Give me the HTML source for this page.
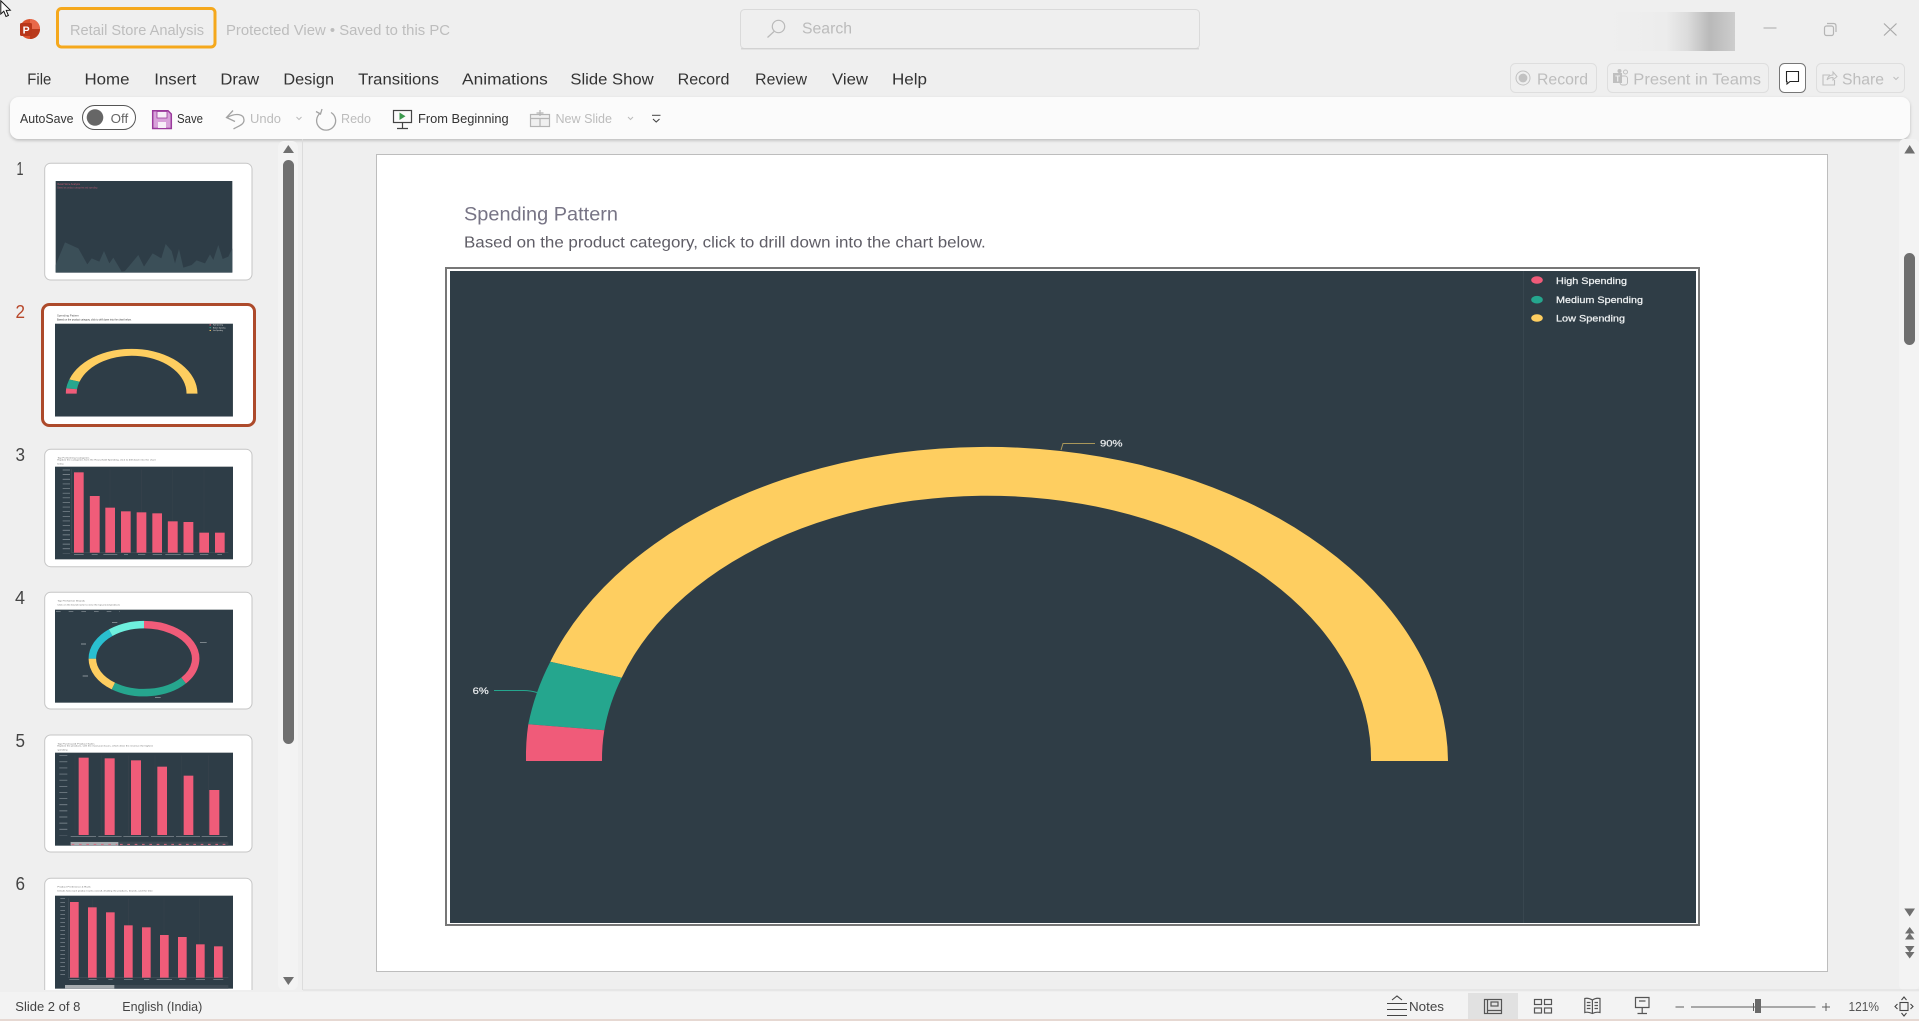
<!DOCTYPE html>
<html lang="en">
<head>
<meta charset="utf-8">
<title>Retail Store Analysis</title>
<style>
html,body{margin:0;padding:0;background:#efefef;overflow:hidden}
svg{display:block;font-family:"Liberation Sans",sans-serif}
.tab{font-size:15.5px;fill:#333}
.rb{font-size:13px;fill:#333}
.rbd{font-size:13px;fill:#bcbcbc}
.tt{font-size:14.5px;fill:#bdbdbd}
.rt{font-size:15.5px;fill:#bdbdbd}
.st{font-size:13px;fill:#444}
.num{font-size:18px;fill:#444}
.lg{font-size:9.5px;fill:#eef1f2;stroke:#eef1f2;stroke-width:.25px}
.pc{font-size:9px;fill:#e3e6e8;stroke:#e3e6e8;stroke-width:.25px}
.tiny{font-size:4.5px;fill:#666}
</style>
</head>
<body>
<svg xmlns="http://www.w3.org/2000/svg" width="1919" height="1021" viewBox="0 0 1919 1021">
<defs>
<linearGradient id="blurg" x1="0" x2="1" y1="0" y2="0">
<stop offset="0" stop-color="#efefef"/><stop offset=".45" stop-color="#ececec"/><stop offset=".62" stop-color="#dcdcdc"/><stop offset=".8" stop-color="#b9b9b9"/><stop offset="1" stop-color="#cdcdcd"/>
</linearGradient>
<filter id="shd" x="-2%" y="-30%" width="104%" height="170%"><feDropShadow dx="0" dy="1.5" stdDeviation="1.5" flood-color="#000" flood-opacity=".22"/></filter>
<filter id="soft" x="-5%" y="-5%" width="110%" height="110%"><feGaussianBlur stdDeviation=".25"/></filter>
<clipPath id="paneclip"><rect x="0" y="140" width="278" height="850"/></clipPath>
</defs>

<rect width="1919" height="1021" fill="#efefef"/>

<!-- Cursor -->
<path d="M.8 .8 L.8 14 L3.8 11.2 L6 16.5 L8.4 15.5 L6.2 10.4 L10.3 10.2 Z" fill="#fff" stroke="#111" stroke-width="1"/>

<!-- Logo -->
<circle cx="30" cy="29" r="10" fill="#d9512c"/>
<path d="M30 19 A10 10 0 0 1 40 29 L30 29 Z" fill="#e8694a"/>
<path d="M30 29 L40 29 A10 10 0 0 1 30 39 Z" fill="#b93a1c"/>
<rect x="20" y="23" width="12" height="13" rx="1.5" fill="#b8371a"/>
<text x="22.6" y="33.4" font-size="10.5" font-weight="bold" fill="#fff">P</text>

<!-- Title -->
<rect x="57.5" y="8.5" width="157.5" height="38.5" rx="4" fill="none" stroke="#f5a81c" stroke-width="3"/>
<text class="tt" x="70" y="35" textLength="134" lengthAdjust="spacingAndGlyphs">Retail Store Analysis</text>
<text class="tt" x="226" y="35" textLength="224" lengthAdjust="spacingAndGlyphs">Protected View • Saved to this PC</text>

<!-- Search -->
<rect x="740.5" y="9.5" width="459" height="39" rx="4" fill="#efefef" stroke="#dadada" stroke-width="1"/>
<path d="M741 48.8 H1199" stroke="#cfcfcf" stroke-width="1.2"/>
<circle cx="778.5" cy="26.5" r="6.2" fill="none" stroke="#b9b9b9" stroke-width="1.2"/>
<path d="M774 31.5 L767.5 37.5" stroke="#b9b9b9" stroke-width="1.2"/>
<text x="802" y="33.5" font-size="15.5" fill="#bbb" textLength="50" lengthAdjust="spacingAndGlyphs">Search</text>

<!-- Window controls -->
<rect x="1609.5" y="12" width="125.5" height="39" fill="url(#blurg)"/>
<path d="M1763.5 28 H1776.5" stroke="#b5b5b5" stroke-width="1.2"/>
<rect x="1824.5" y="26" width="9" height="9.5" rx="2" fill="none" stroke="#b5b5b5" stroke-width="1.2"/>
<path d="M1827 23.5 H1833.5 Q1836 23.5 1836 26 V32" fill="none" stroke="#b5b5b5" stroke-width="1.2"/>
<path d="M1884 23.5 L1896.5 35.5 M1896.5 23.5 L1884 35.5" stroke="#a9a9a9" stroke-width="1.2"/>

<!-- Tabs -->
<text class="tab" x="27.3" y="84.3" textLength="24" lengthAdjust="spacingAndGlyphs">File</text>
<text class="tab" x="84.5" y="84.3" textLength="45" lengthAdjust="spacingAndGlyphs">Home</text>
<text class="tab" x="154.3" y="84.3" textLength="42" lengthAdjust="spacingAndGlyphs">Insert</text>
<text class="tab" x="220.4" y="84.3" textLength="38.8" lengthAdjust="spacingAndGlyphs">Draw</text>
<text class="tab" x="283.4" y="84.3" textLength="50.6" lengthAdjust="spacingAndGlyphs">Design</text>
<text class="tab" x="358.1" y="84.3" textLength="80.8" lengthAdjust="spacingAndGlyphs">Transitions</text>
<text class="tab" x="462" y="84.3" textLength="85.8" lengthAdjust="spacingAndGlyphs">Animations</text>
<text class="tab" x="570.4" y="84.3" textLength="83.2" lengthAdjust="spacingAndGlyphs">Slide Show</text>
<text class="tab" x="677.6" y="84.3" textLength="51.8" lengthAdjust="spacingAndGlyphs">Record</text>
<text class="tab" x="755.2" y="84.3" textLength="51.8" lengthAdjust="spacingAndGlyphs">Review</text>
<text class="tab" x="832" y="84.3" textLength="36" lengthAdjust="spacingAndGlyphs">View</text>
<text class="tab" x="892" y="84.3" textLength="35" lengthAdjust="spacingAndGlyphs">Help</text>

<!-- Top-right buttons -->
<rect x="1510.5" y="63.5" width="86" height="29" rx="5" fill="none" stroke="#dedede"/>
<circle cx="1523" cy="78" r="7" fill="none" stroke="#c2c2c2"/><circle cx="1523" cy="78" r="4.4" fill="#c2c2c2"/>
<text class="rt" x="1537" y="84.3" textLength="51" lengthAdjust="spacingAndGlyphs">Record</text>
<rect x="1607.5" y="63.5" width="161" height="29" rx="5" fill="none" stroke="#dedede"/>
<rect x="1613" y="73" width="9" height="10" fill="#bfbfbf"/>
<rect x="1620" y="76" width="7.5" height="9" rx="2.5" fill="none" stroke="#bfbfbf"/>
<circle cx="1625.5" cy="72" r="2" fill="none" stroke="#bfbfbf"/><circle cx="1619.5" cy="71" r="2" fill="#bfbfbf"/>
<text x="1615.3" y="81.5" font-size="8" font-weight="bold" fill="#efefef">T</text>
<text class="rt" x="1633.3" y="84.3" textLength="127.7" lengthAdjust="spacingAndGlyphs">Present in Teams</text>
<rect x="1779.5" y="63.5" width="26" height="29" rx="5" fill="#fff" stroke="#777"/>
<path d="M1786.5 71.5 H1798.5 V81.5 H1790 L1787 84 V81.5 H1786.5 Z" fill="none" stroke="#222" stroke-width="1.1"/>
<rect x="1816.5" y="63.5" width="88" height="29" rx="5" fill="none" stroke="#dedede"/>
<path d="M1830 75 H1823 V85 H1834.5 V80" fill="none" stroke="#bfbfbf" stroke-width="1.1"/>
<path d="M1827 80 Q1828 75 1833 75 V72 L1837 76.5 L1833 80 V77.5 Q1829 77.5 1827 80 Z" fill="none" stroke="#bfbfbf" stroke-width="1"/>
<text class="rt" x="1842" y="84.3" textLength="42" lengthAdjust="spacingAndGlyphs">Share</text>
<path d="M1893.5 77 L1896 79.5 L1898.5 77" fill="none" stroke="#bfbfbf" stroke-width="1"/>

<!-- Quick access ribbon -->
<rect x="10" y="97" width="1900" height="42" rx="9" fill="#fbfbfb" filter="url(#shd)"/>
<text class="rb" x="20" y="123" textLength="53.5" lengthAdjust="spacingAndGlyphs">AutoSave</text>
<rect x="82.5" y="105.5" width="53" height="24" rx="12" fill="#fff" stroke="#555" stroke-width="1"/>
<circle cx="95" cy="117.5" r="8.3" fill="#666"/>
<text class="rb" x="110.6" y="123" textLength="17.6" lengthAdjust="spacingAndGlyphs" style="fill:#666">Off</text>
<!-- Save -->
<path d="M152.7 110.7 H168 L171.3 114 V128.5 H152.7 Z" fill="#d8a2da" stroke="#9a3a9c" stroke-width="1.5"/>
<rect x="157" y="111.5" width="10" height="6.5" fill="#f7eef8" stroke="#9a3a9c" stroke-width=".8"/>
<rect x="158" y="122" width="8" height="6" fill="#f7eef8"/>
<text class="rb" x="177" y="123" textLength="26" lengthAdjust="spacingAndGlyphs">Save</text>
<!-- Undo -->
<path d="M233 110.5 L226.5 117.5 L235 121.5" fill="none" stroke="#a3a3a3" stroke-width="1.3"/>
<path d="M227 117.5 C236 112.5 244 114 244 120 C244 125 238 126 233.5 129" fill="none" stroke="#a3a3a3" stroke-width="1.3"/>
<text class="rbd" x="250" y="123" textLength="31" lengthAdjust="spacingAndGlyphs">Undo</text>
<path d="M296.5 117 L299 119.5 L301.5 117" fill="none" stroke="#bbb" stroke-width="1"/>
<!-- Redo -->
<path d="M320.5 113 A9.5 9.5 0 1 0 331 112.5" fill="none" stroke="#a3a3a3" stroke-width="1.3"/>
<path d="M322 109 L320.5 114 L316 111.5" fill="none" stroke="#a3a3a3" stroke-width="1.3"/>
<text class="rbd" x="341" y="123" textLength="30" lengthAdjust="spacingAndGlyphs">Redo</text>
<!-- From Beginning -->
<rect x="393.5" y="110.5" width="18" height="12" fill="none" stroke="#444" stroke-width="1.2"/>
<path d="M399.5 112.5 V120 L405.5 116.2 Z" fill="#3c9a4e"/>
<path d="M402.5 122.5 V128 M397 128.5 H408" stroke="#444" stroke-width="1.2"/>
<text class="rb" x="418" y="123" textLength="90.6" lengthAdjust="spacingAndGlyphs">From Beginning</text>
<!-- New Slide -->
<rect x="530.5" y="114.5" width="19" height="12" fill="#f0f0f0" stroke="#b5b5b5" stroke-width="1.2"/>
<path d="M530.5 118.5 H549.5 M540 118.5 V126.5 M540 110 V116 M536.5 113 H543.5" stroke="#b5b5b5" stroke-width="1.2" fill="none"/>
<text class="rbd" x="555.5" y="123" textLength="56.5" lengthAdjust="spacingAndGlyphs">New Slide</text>
<path d="M628 117 L630.5 119.5 L633 117" fill="none" stroke="#bbb" stroke-width="1"/>
<!-- Customize -->
<path d="M652 115.3 H660.5" stroke="#444" stroke-width="1"/>
<path d="M653 119 L656.2 122 L659.5 119" fill="none" stroke="#444" stroke-width="1.1"/>

<!-- Thumbnail pane -->
<g clip-path="url(#paneclip)">
  <!-- 1 -->
  <rect x="44.7" y="163.2" width="207.3" height="116.8" rx="6" fill="#fff" stroke="#c6c6c6"/>
  <g transform="translate(0,145) scale(.33333)" filter="url(#soft)">
    <rect x="167" y="108" width="530" height="275" fill="#2f3d46"/>
    <path d="M167 360 L195 292 L235 310 L262 358 L275 340 L298 350 L312 318 L328 355 L340 338 L365 380 L375 378 L415 330 L432 365 L458 325 L484 340 L497 297 L515 318 L525 355 L537 312 L550 368 L575 360 L590 346 L615 355 L630 328 L640 345 L655 300 L668 342 L685 335 L697 310 V382 H167 Z" fill="#3b4f59"/>
    <text x="172" y="120" font-size="7" fill="#c25a72" textLength="68" lengthAdjust="spacingAndGlyphs">Retail Store Analysis</text>
    <text x="172" y="130" font-size="7" fill="#a85770" textLength="120" lengthAdjust="spacingAndGlyphs">Based on product categories and spending</text>
  </g>
  <!-- 2 -->
  <rect x="42.5" y="304.5" width="212" height="121" rx="7" fill="#fff" stroke="#ad4a2b" stroke-width="3"/>
  <g transform="translate(-9.26,285) scale(.1428)" filter="url(#soft)">
    <rect x="450" y="271" width="1246" height="650" fill="#2f3d46"/>
    <path d="M550.3 661.7 A461 316 0 0 1 1448 761 H1371 A384 263 0 0 0 621.7 677.7 Z" fill="#fece60"/>
    <path d="M528.3 724.3 A461 316 0 0 1 550.3 661.7 L621.7 677.7 A384 263 0 0 0 604.3 730.3 Z" fill="#25a68e"/>
    <path d="M526 761 A461 316 0 0 1 528.3 724.3 L604.3 730.3 A384 263 0 0 0 602 761 Z" fill="#f05b79"/>
    <text x="464" y="220" font-size="19" fill="#555" textLength="154" lengthAdjust="spacingAndGlyphs">Spending Pattern</text>
    <text x="464" y="248" font-size="16" fill="#333" textLength="521" lengthAdjust="spacingAndGlyphs">Based on the product category, click to drill down into the chart below.</text>
    <text x="1556" y="284" font-size="11" fill="#ddd" textLength="71" lengthAdjust="spacingAndGlyphs">High Spending</text>
    <text x="1556" y="303" font-size="11" fill="#ddd" textLength="87" lengthAdjust="spacingAndGlyphs">Medium Spending</text>
    <text x="1556" y="322" font-size="11" fill="#ddd" textLength="69" lengthAdjust="spacingAndGlyphs">Low Spending</text>
    <ellipse cx="1537" cy="280" rx="6" ry="4" fill="#f05b79"/><ellipse cx="1537" cy="299" rx="6" ry="4" fill="#25a68e"/><ellipse cx="1537" cy="318" rx="6" ry="4" fill="#fece60"/>
  </g>
  <!-- 3 -->
  <rect x="44.7" y="449.3" width="207.3" height="117.4" rx="6" fill="#fff" stroke="#c6c6c6"/>
  <g transform="translate(0,440) scale(.33333)" filter="url(#soft)">
    <text class="tiny" x="172" y="55" textLength="96" lengthAdjust="spacingAndGlyphs">Top Performing Categories</text>
    <text class="tiny" x="172" y="62" textLength="295" lengthAdjust="spacingAndGlyphs">Explore the categories from the Household Spending, click to drill down into the chart</text>
    <text class="tiny" x="172" y="74" textLength="20" lengthAdjust="spacingAndGlyphs">below.</text>
    <rect x="165" y="80" width="534" height="278" fill="#2f3d46"/>
    <path d="M199 89 V340" stroke="#87929a" stroke-width="22" stroke-dasharray="2 11.9"/>
    <path d="M215 88 V338 H685" stroke="#5b6871" stroke-width="1" fill="none"/>
    <path d="M236 88 V338 M330 88 V338 M424 88 V338 M518 88 V338 M612 88 V338" stroke="#3a4853" stroke-width="1"/>
    <g fill="#f05b79"><rect x="222" y="97" width="29" height="241"/><rect x="269.5" y="168" width="29.5" height="170"/><rect x="316" y="203" width="29" height="135"/><rect x="363" y="214" width="29" height="124"/><rect x="410" y="217" width="29" height="121"/><rect x="457" y="220" width="29" height="118"/><rect x="503.5" y="244" width="29.5" height="94"/><rect x="550.5" y="246" width="29.5" height="92"/><rect x="598" y="278" width="29" height="60"/><rect x="645" y="278" width="29" height="60"/></g>
    <path d="M222 343 H251 M275 343 H293 M310 343 H352 M372 343 H384 M414 343 H436 M458 343 H486 M496 343 H542 M551 343 H581 M600 343 H625 M652 343 H666" stroke="#8d979e" stroke-width="2"/>
  </g>
  <!-- 4 -->
  <rect x="44.7" y="592.3" width="207.3" height="116.7" rx="6" fill="#fff" stroke="#c6c6c6"/>
  <g transform="translate(0,440) scale(.33333)" filter="url(#soft)">
    <text class="tiny" x="172" y="485" textLength="83" lengthAdjust="spacingAndGlyphs">Top Performer Brands</text>
    <text class="tiny" x="172" y="497" textLength="188" lengthAdjust="spacingAndGlyphs">Click on the brand name to view the top priced products</text>
    <rect x="165" y="509" width="534" height="279" fill="#2f3d46"/>
    <path d="M168 514 H360" stroke="#8d979e" stroke-width="2" stroke-dasharray="14 24"/>
    <g fill="none" stroke-width="22.5">
      <path d="M432 554 A155 102 0 0 1 550.7 721.6" stroke="#f05b79"/>
      <path d="M550.7 721.6 A155 102 0 0 1 340 738" stroke="#25a68e"/>
      <path d="M340 738 A155 102 0 0 1 277 656" stroke="#fece60"/>
      <path d="M277 656 A155 102 0 0 1 332 578" stroke="#2bbfd0"/>
      <path d="M332 578 A155 102 0 0 1 432 554" stroke="#6ef0de"/>
    </g>
    <path d="M243 612 H258 M248 708 H264 M600 607 H620 M465 772 H482 M336 548 H352" stroke="#a8b0b5" stroke-width="2"/>
  </g>
  <!-- 5 -->
  <rect x="44.7" y="735" width="207.3" height="117" rx="6" fill="#fff" stroke="#c6c6c6"/>
  <g transform="translate(0,730) scale(.33333)" filter="url(#soft)">
    <text class="tiny" x="172" y="44" textLength="112" lengthAdjust="spacingAndGlyphs">Top Purchased Product Sales</text>
    <text class="tiny" x="172" y="50" textLength="287" lengthAdjust="spacingAndGlyphs">Explore the products, with the most purchases, which drive the revenue the highest</text>
    <text class="tiny" x="172" y="62" textLength="30" lengthAdjust="spacingAndGlyphs">spending</text>
    <rect x="165" y="68" width="534" height="279" fill="#2f3d46"/>
    <path d="M190 76 V316" stroke="#87929a" stroke-width="24" stroke-dasharray="2 16.4"/>
    <path d="M225 76 V315 M305 76 V315 M385 76 V315 M465 76 V315 M545 76 V315 M625 76 V315" stroke="#3a4853" stroke-width="1"/>
    <g fill="#f05b79"><rect x="236" y="83" width="30" height="232"/><rect x="314" y="85" width="30" height="230"/><rect x="393" y="91" width="30" height="224"/><rect x="472" y="110" width="29" height="205"/><rect x="551" y="137" width="29" height="178"/><rect x="628" y="180" width="30" height="135"/></g>
    <path d="M212 320 H288 M295 320 H365 M370 320 H446 M453 320 H522 M528 320 H600 M605 320 H682" stroke="#8d979e" stroke-width="2"/>
    <rect x="210" y="335" width="475" height="12" fill="#3c4952"/>
    <rect x="212" y="336" width="143" height="11" fill="#a7acb0"/>
    <path d="M215 343 H352 M360 343 H684" stroke="#d9677f" stroke-width="3" stroke-dasharray="8 14"/>
  </g>
  <!-- 6 -->
  <rect x="44.7" y="878.3" width="207.3" height="130" rx="6" fill="#fff" stroke="#c6c6c6"/>
  <g transform="translate(0,730) scale(.33333)" filter="url(#soft)">
    <text class="tiny" x="172" y="473" textLength="100" lengthAdjust="spacingAndGlyphs">Product Preference &amp; Rank</text>
    <text class="tiny" x="172" y="485" textLength="286" lengthAdjust="spacingAndGlyphs">Details how each product ranks overall, dividing the products, brands, and the time</text>
    <rect x="165" y="497" width="534" height="279" fill="#2f3d46"/>
    <path d="M188 505 V745" stroke="#87929a" stroke-width="14" stroke-dasharray="2 10"/>
    <path d="M205 505 V743 H685" stroke="#5b6871" stroke-width="1" fill="none"/>
    <path d="M278 505 V743 M385 505 V743 M492 505 V743 M599 505 V743" stroke="#3a4853" stroke-width="1"/>
    <g fill="#f05b79"><rect x="210" y="516" width="26" height="227"/><rect x="264" y="532" width="26" height="211"/><rect x="318" y="547" width="26" height="196"/><rect x="372" y="586" width="26" height="157"/><rect x="426" y="592" width="26" height="151"/><rect x="480" y="615" width="26" height="128"/><rect x="534" y="621" width="26" height="122"/><rect x="588" y="643" width="26" height="100"/><rect x="642" y="649" width="26" height="94"/></g>
    <path d="M208 748 H238 M266 748 H290 M325 748 H338 M372 748 H398 M432 748 H448 M470 748 H516 M538 748 H556 M587 748 H615 M640 748 H670" stroke="#8d979e" stroke-width="2"/>
    <rect x="195" y="765" width="490" height="11" fill="#3c4952"/>
    <rect x="195" y="765" width="148" height="11" fill="#a7acb0"/>
  </g>
</g>
<text class="num" x="16.5" y="175" textLength="7" lengthAdjust="spacingAndGlyphs">1</text>
<text class="num" x="15.5" y="318" textLength="9.5" lengthAdjust="spacingAndGlyphs" style="fill:#b7472a">2</text>
<text class="num" x="15.5" y="461" textLength="9.5" lengthAdjust="spacingAndGlyphs">3</text>
<text class="num" x="15" y="604" textLength="10" lengthAdjust="spacingAndGlyphs">4</text>
<text class="num" x="15.5" y="747" textLength="9.5" lengthAdjust="spacingAndGlyphs">5</text>
<text class="num" x="15.5" y="890" textLength="9.5" lengthAdjust="spacingAndGlyphs">6</text>

<!-- Left scrollbar -->
<rect x="278" y="141" width="20" height="849" rx="6" fill="#f3f3f3"/>
<path d="M288.3 145 L294 153 H283 Z" fill="#6f6f6f"/>
<rect x="283" y="160" width="11" height="584" rx="5.5" fill="#6f6f6f"/>
<path d="M288.3 985 L294 977 H283 Z" fill="#6f6f6f"/>
<path d="M302.5 139 V990" stroke="#dcdcdc" stroke-width="1"/>

<!-- Slide -->
<rect x="376.5" y="154.5" width="1451" height="817" fill="#fff" stroke="#bdbdbd" stroke-width="1"/>
<text x="464" y="220.7" font-size="19.5" fill="#777485" textLength="154" lengthAdjust="spacingAndGlyphs">Spending Pattern</text>
<text x="464" y="247.7" font-size="16" fill="#5f5d66" textLength="521.7" lengthAdjust="spacingAndGlyphs">Based on the product category, click to drill down into the chart below.</text>

<!-- Chart -->
<rect x="446" y="268" width="1253" height="657" fill="#fff" stroke="#777" stroke-width="2"/>
<rect x="450" y="271" width="1246" height="652" fill="#2f3d46"/>
<path d="M1523.5 271 V923" stroke="#38464f" stroke-width="1"/>
<path d="M550.3 661.7 A461 316 0 0 1 1448 761 H1371 A384 263 0 0 0 621.7 677.7 Z" fill="#fece60"/>
<path d="M528.3 724.3 A461 316 0 0 1 550.3 661.7 L621.7 677.7 A384 263 0 0 0 604.3 730.3 Z" fill="#25a68e"/>
<path d="M526 761 A461 316 0 0 1 528.3 724.3 L604.3 730.3 A384 263 0 0 0 602 761 Z" fill="#f05b79"/>
<path d="M494 690.5 H524 Q530 690.5 537 692.5" fill="none" stroke="#25a68e" stroke-width="1"/>
<text class="pc" x="472.7" y="694" textLength="16" lengthAdjust="spacingAndGlyphs">6%</text>
<path d="M1095 443.5 H1063 L1061 450" fill="none" stroke="#a8965a" stroke-width="1"/>
<text class="pc" x="1100" y="446.5" textLength="22.5" lengthAdjust="spacingAndGlyphs">90%</text>
<ellipse cx="1537" cy="280" rx="5.8" ry="3.8" fill="#f05b79"/>
<ellipse cx="1537" cy="299.7" rx="5.8" ry="3.8" fill="#25a68e"/>
<ellipse cx="1537" cy="318" rx="5.8" ry="3.8" fill="#fece60"/>
<text class="lg" x="1556" y="284" textLength="71" lengthAdjust="spacingAndGlyphs">High Spending</text>
<text class="lg" x="1556" y="303" textLength="87" lengthAdjust="spacingAndGlyphs">Medium Spending</text>
<text class="lg" x="1556" y="321.5" textLength="69" lengthAdjust="spacingAndGlyphs">Low Spending</text>

<!-- Right scrollbar -->
<rect x="1899" y="139" width="20" height="851" rx="5" fill="#f3f3f3"/>
<path d="M1909.7 145 L1915 153.5 H1904.3 Z" fill="#6f6f6f"/>
<rect x="1904" y="253" width="11" height="92" rx="5.5" fill="#6f6f6f"/>
<path d="M1909.7 916.5 L1915 908.5 H1904.3 Z" fill="#6f6f6f"/>
<path d="M1909.7 927 L1914.5 933.5 H1905 Z M1909.7 933 L1914.5 939.5 H1905 Z" fill="#6f6f6f"/>
<path d="M1909.7 958.5 L1914.5 952 H1905 Z M1909.7 952.5 L1914.5 946 H1905 Z" fill="#6f6f6f"/>

<!-- Status bar -->
<path d="M303 990 H1919" stroke="#dcdcdc" stroke-width="1"/>
<rect x="0" y="992" width="1919" height="27" fill="#f3f3f3"/>
<rect x="0" y="1019" width="1919" height="2" fill="#e6d8d2"/>
<text class="st" x="15.3" y="1011" textLength="65" lengthAdjust="spacingAndGlyphs">Slide 2 of 8</text>
<text class="st" x="122.3" y="1011" textLength="80" lengthAdjust="spacingAndGlyphs">English (India)</text>
<path d="M1392 1000 L1397 996 L1402 1000 M1387 1003.5 H1407 M1387 1009.5 H1407 M1387 1015.5 H1407" fill="none" stroke="#444" stroke-width="1.1"/>
<text class="st" x="1409" y="1011" textLength="35" lengthAdjust="spacingAndGlyphs">Notes</text>
<rect x="1468" y="993" width="50" height="26" fill="#e1e1e1"/>
<g fill="none" stroke="#555" stroke-width="1.2">
  <rect x="1484.5" y="999.5" width="17" height="14"/><path d="M1487.5 999.5 V1013.5 M1487.5 1010.5 H1501.5"/><rect x="1491" y="1002" width="7" height="4"/>
  <rect x="1534.5" y="999.5" width="7" height="5"/><rect x="1544.5" y="999.5" width="7" height="5"/><rect x="1534.5" y="1008" width="7" height="5"/><rect x="1544.5" y="1008" width="7" height="5"/>
  <path d="M1592.4 1000 Q1588 997.5 1584.8 998.5 V1012.5 Q1588 1011.5 1592.4 1013.5 Q1596 1011.5 1600 1012.5 V998.5 Q1596 997.5 1592.4 1000 Z M1592.4 1000 V1013.5 M1586.8 1002.5 H1590.5 M1586.8 1005.5 H1590.5 M1586.8 1008.5 H1590.5 M1594.5 1002.5 H1598 M1594.5 1005.5 H1598 M1594.5 1008.5 H1598"/>
  <path d="M1635.5 997.5 H1649 V1007.5 H1635.5 Z M1639 1001 H1645.5 M1642.2 1007.5 V1013 M1637.5 1013.5 H1647"/>
</g>
<path d="M1675.5 1007 H1684 M1691 1007 H1815.5 M1753.5 1003 V1011 M1822 1007 H1830 M1826 1003 V1011" stroke="#5c5c5c" stroke-width="1" fill="none"/>
<rect x="1755" y="999" width="6" height="14" fill="#6a6a6a"/>
<text x="1848.5" y="1011" font-size="12.5" fill="#555" textLength="30.5" lengthAdjust="spacingAndGlyphs">121%</text>
<g fill="none" stroke="#444" stroke-width="1.1">
  <rect x="1900" y="1002.5" width="8" height="8"/>
  <path d="M1901.5 1000 L1904 997 L1906.5 1000 M1901.5 1013 L1904 1016 L1906.5 1013 M1897.5 1004 L1895 1006.5 L1897.5 1009 M1910.5 1004 L1913 1006.5 L1910.5 1009"/>
</g>
</svg>
</body>
</html>
